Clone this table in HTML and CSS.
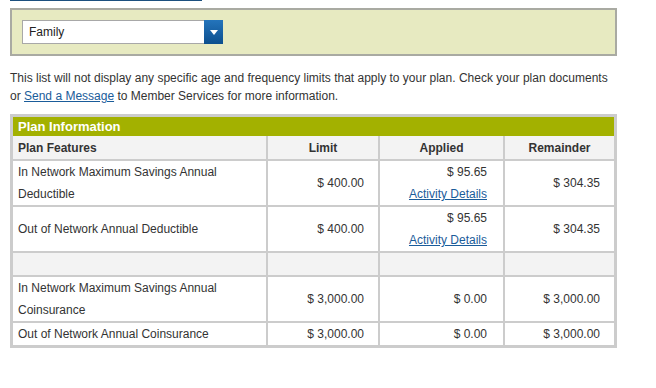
FILE: index.html
```html
<!DOCTYPE html>
<html>
<head>
<meta charset="utf-8">
<link rel="stylesheet" href="styles.css">
</head>
<body>
<div class="page">
  <div class="topline"></div>
  <div class="filter">
    <div class="select">
      <span class="select-text">Family</span>
      <span class="select-btn"><svg width="8" height="5" viewBox="0 0 8 5"><path d="M0 0H8L4 5Z" fill="#fff"/></svg></span>
    </div>
  </div>
  <p class="note">This list will not display any specific age and frequency limits that apply to your plan. Check your plan documents or <a href="#">Send a Message</a> to Member Services for more information.</p>
  <div class="plan">
    <div class="plan-title">Plan Information</div>
    <table class="plan-table">
      <colgroup><col class="c1"><col class="c2"><col class="c3"><col class="c4"></colgroup>
      <thead>
        <tr><th class="left">Plan Features</th><th>Limit</th><th>Applied</th><th>Remainder</th></tr>
      </thead>
      <tbody>
        <tr><td class="left">In Network Maximum Savings Annual Deductible</td><td class="num">$ 400.00</td><td class="num applied">$ 95.65<br><a href="#">Activity Details</a></td><td class="num">$ 304.35</td></tr>
        <tr><td class="left">Out of Network Annual Deductible</td><td class="num">$ 400.00</td><td class="num applied">$ 95.65<br><a href="#">Activity Details</a></td><td class="num">$ 304.35</td></tr>
        <tr class="blank"><td>&nbsp;</td><td></td><td></td><td></td></tr>
        <tr><td class="left">In Network Maximum Savings Annual Coinsurance</td><td class="num">$ 3,000.00</td><td class="num applied">$ 0.00</td><td class="num">$ 3,000.00</td></tr>
        <tr><td class="left">Out of Network Annual Coinsurance</td><td class="num">$ 3,000.00</td><td class="num applied">$ 0.00</td><td class="num">$ 3,000.00</td></tr>
      </tbody>
    </table>
  </div>
</div>
</body>
</html>
```

FILE: styles.css
```css
html, body { margin: 0; padding: 0; background: #fff; }
body { font-family: Arial, "Liberation Sans", sans-serif; font-size: 12px; color: #333; }
.page { padding-left: 10px; width: 607px; }
.topline { width: 192px; height: 2px; background: #1b4f7e; margin-top: -1px; }
.filter {
  margin-top: 7px;
  border: 2px solid #a9aaa2;
  background: #e7eac1;
  padding: 10px;
}
.select {
  display: flex;
  width: 201px;
  height: 24px;
  box-sizing: border-box;
  border: 1px solid #a8a8a8;
  background: #fff;
}
.select-text { flex: 1; padding-left: 6px; line-height: 22px; color: #222; font-size: 12px; }
.select-btn {
  width: 19px;
  display: flex; align-items: center; justify-content: center;
  background: linear-gradient(#2474bb, #0c4f8e);
  margin: -1px -1px -1px 0;
}
.note { margin: 13px 0 9px; line-height: 18px; color: #333; }
.note a { color: #1a5c9a; text-decoration: underline; }
.plan { border: 3px solid #cccccc; }
.plan-title {
  background: #a3b100;
  color: #fff;
  font-weight: bold;
  font-size: 13px;
  height: 19px;
  line-height: 19px;
  padding-left: 5px;
}
.plan-table {
  width: 601px;
  border-collapse: collapse;
  table-layout: fixed;
  border-style: hidden;
}
.c1 { width: 254px; } .c2 { width: 112px; } .c3 { width: 125px; } .c4 { width: 110px; }
.plan-table th, .plan-table td {
  border: 2px solid #cccccc;
  padding: 0 5px;
  line-height: 22px;
  vertical-align: middle;
}
.plan-table th { background: #f3f3f3; font-weight: bold; height: 23px; text-align: center; }
.plan-table th.left, .plan-table td.left { text-align: left; }
.plan-table td.num { text-align: right; padding-right: 14px; }
.plan-table td.applied { padding-right: 16px; }
.plan-table td a { color: #1a5c9a; text-decoration: underline; }
.plan-table tr.blank td { background: #f3f3f3; }
```
